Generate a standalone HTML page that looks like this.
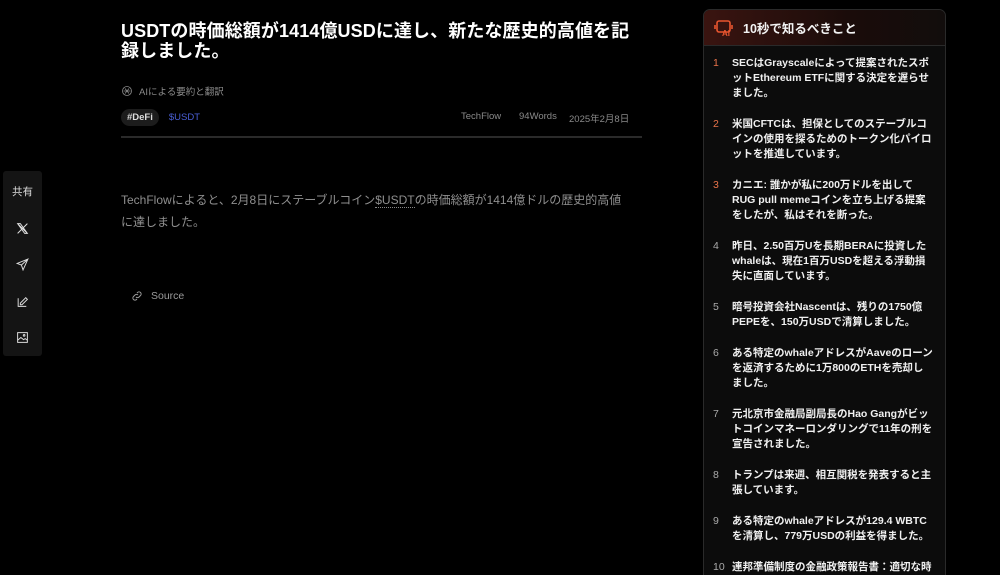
<!DOCTYPE html>
<html><head><meta charset="utf-8"><style>
*{margin:0;padding:0;box-sizing:border-box}
html,body{width:1000px;height:575px;overflow:hidden}
body{background:#000;font-family:"Liberation Sans","Noto Sans CJK JP",sans-serif;color:#fff;position:relative}
.title{position:absolute;left:121px;top:21px;width:515px;font-size:18px;font-weight:bold;line-height:20px;color:#fff;letter-spacing:0.1px}
.ai{position:absolute;left:121px;top:84px;font-size:9.5px;color:#8a8a8a;display:flex;align-items:center;gap:6px}
.tags{position:absolute;left:121px;top:109px;font-size:9.5px;display:flex;align-items:center}
.tag{background:#1c1c1c;color:#ddd;border-radius:9px;padding:3px 6px;font-weight:bold}
.usdt{color:#4a5fd6;margin-left:10px}
.meta{position:absolute;top:111px;font-size:9.5px;color:#8a8a8a}
.hr{position:absolute;left:121px;top:136px;width:521px;height:2px;background:#2a2a2a}
.body{position:absolute;left:121px;top:189px;width:512px;font-size:12px;line-height:22px;color:#8f8f8f}
.body u{text-decoration:none;border-bottom:1px dotted #888}
.src{position:absolute;left:131px;top:290px;font-size:10.5px;color:#9a9a9a;display:flex;align-items:center;gap:8px}
.share{position:absolute;left:3px;top:171px;width:39px;height:185px;background:#141414;border-radius:3px}
.share .lbl{position:absolute;top:13px;width:39px;text-align:center;font-size:10.5px;color:#ddd}
.share svg{position:absolute;left:13px}
.panel{position:absolute;left:703px;top:9px;width:243px;height:580px;background:#0c0c0c;border:1px solid #2a2a2a;border-radius:7px;overflow:hidden}
.ph{height:36px;background:linear-gradient(90deg,#3a1410,#1a0c0a 60%,#120d0c);border-bottom:1px solid #2a2a2a;display:flex;align-items:center;padding-left:10px}
.ph span{font-size:12.5px;font-weight:bold;margin-left:9px;color:#f2f2f2}
ol{list-style:none;padding:10px 12px 0 9px}
li{display:flex;font-size:10.5px;font-weight:bold;line-height:15px;margin-bottom:16px;color:#f0f0f0}
li b{width:19px;flex:none;font-weight:normal;color:#aaa}
li.o b{color:#e8734a}
</style></head><body>
<div class="title">USDTの時価総額が1414億USDに達し、新たな歴史的高値を記録しました。</div>
<div class="ai"><svg width="12" height="12" viewBox="0 0 24 24" fill="none" stroke="#8a8a8a" stroke-width="1.6"><circle cx="12" cy="12" r="9"/><path d="M8 7l8 10M16 7L8 17M5 12h14"/></svg>AIによる要約と翻訳</div>
<div class="tags"><span class="tag">#DeFi</span><span class="usdt">$USDT</span></div>
<div class="meta" style="left:461px">TechFlow</div>
<div class="meta" style="left:519px">94Words</div>
<div class="meta" style="left:569px">2025年2月8日</div>
<div class="hr"></div>
<div class="body">TechFlowによると、2月8日にステーブルコイン<u>$USDT</u>の時価総額が1414億ドルの歴史的高値に達しました。</div>
<div class="src"><svg width="12" height="12" viewBox="0 0 24 24" fill="none" stroke="#9a9a9a" stroke-width="2"><path d="M10 14a4 4 0 0 0 6 0l3-3a4 4 0 0 0-6-6l-1 1M14 10a4 4 0 0 0-6 0l-3 3a4 4 0 0 0 6 6l1-1"/></svg>Source</div>
<div class="share"><div class="lbl">共有</div>
<svg style="top:51px" width="13" height="13" viewBox="0 0 24 24" fill="none" stroke="#ddd" stroke-width="1.8"><path d="M3 3l18 18M21 3L3 21M3 3h5l13 18h-5z"/></svg>
<svg style="top:87px" width="13" height="13" viewBox="0 0 24 24" fill="none" stroke="#ddd" stroke-width="1.8"><path d="M22 2L2 10l8 3 3 9zM10 13l12-11"/></svg>
<svg style="top:124px" width="13" height="13" viewBox="0 0 24 24" fill="none" stroke="#ddd" stroke-width="1.8"><path d="M4 6v15h15M8 15l10-10 3 3-10 10H8z"/></svg>
<svg style="top:160px" width="13" height="13" viewBox="0 0 24 24" fill="none" stroke="#ddd" stroke-width="1.8"><rect x="3" y="3" width="18" height="18"/><path d="M3 17l6-5 5 4 3-2 4 3"/><circle cx="15" cy="8" r="1.5"/></svg>
</div>
<div class="panel">
<div class="ph"><svg width="20" height="18" viewBox="0 0 20 18" fill="none" stroke="#e8552f" stroke-width="1.6"><rect x="3" y="2" width="13" height="11" rx="2"/><path d="M1 6v4M18 6v4"/><text x="8" y="17" font-size="8" fill="#e8552f" stroke="none" font-weight="bold" font-family="Liberation Sans">AI</text></svg><span>10秒で知るべきこと</span></div>
<ol>
<li class="o"><b>1</b>SECはGrayscaleによって提案されたスポットEthereum ETFに関する決定を遅らせました。</li>
<li class="o"><b>2</b>米国CFTCは、担保としてのステーブルコインの使用を探るためのトークン化パイロットを推進しています。</li>
<li class="o"><b>3</b>カニエ: 誰かが私に200万ドルを出してRUG pull memeコインを立ち上げる提案をしたが、私はそれを断った。</li>
<li><b>4</b>昨日、2.50百万Uを長期BERAに投資したwhaleは、現在1百万USDを超える浮動損失に直面しています。</li>
<li><b>5</b>暗号投資会社Nascentは、残りの1750億PEPEを、150万USDで清算しました。</li>
<li><b>6</b>ある特定のwhaleアドレスがAaveのローンを返済するために1万800のETHを売却しました。</li>
<li><b>7</b>元北京市金融局副局長のHao Gangがビットコインマネーロンダリングで11年の刑を宣告されました。</li>
<li><b>8</b>トランプは来週、相互関税を発表すると主張しています。</li>
<li><b>9</b>ある特定のwhaleアドレスが129.4 WBTCを清算し、779万USDの利益を得ました。</li>
<li><b>10</b>連邦準備制度の金融政策報告書：適切な時期に</li>
</ol></div>
</body></html>
